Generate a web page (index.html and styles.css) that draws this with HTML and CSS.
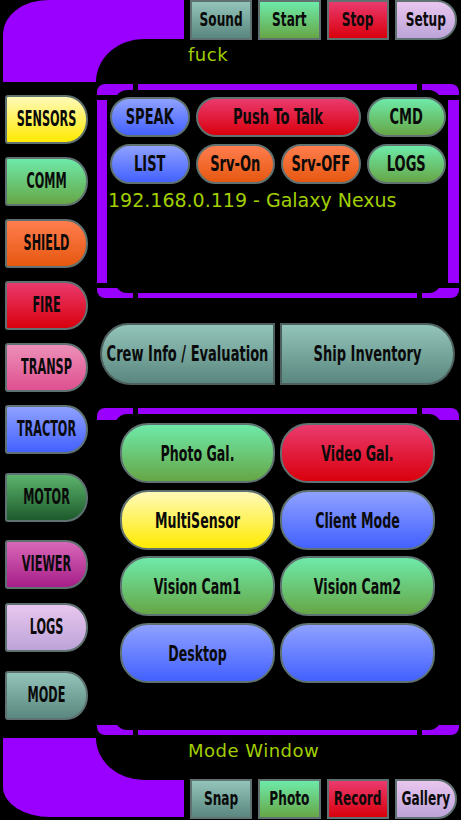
FILE: index.html
```html
<!DOCTYPE html>
<html lang="en">
<head>
<meta charset="utf-8">
<title>LCARS Panel</title>
<link rel="stylesheet" href="styles.css">
</head>
<body>
<div class="screen">
  <header class="top">
    <div class="elbow elbow-top"></div>
    <div class="top-right">
      <nav class="bar">
        <div class="tb teal"><span class="lbl">Sound</span></div>
        <div class="tb green"><span class="lbl">Start</span></div>
        <div class="tb red"><span class="lbl">Stop</span></div>
        <div class="tb lav end"><span class="lbl">Setup</span></div>
      </nav>
      <div class="caption cap-top">fuck</div>
    </div>
  </header>

  <div class="main">
    <aside class="side">
      <div class="sb yellow"><span class="lbl">SENSORS</span></div>
      <div class="sb green"><span class="lbl">COMM</span></div>
      <div class="sb orange"><span class="lbl">SHIELD</span></div>
      <div class="sb red"><span class="lbl">FIRE</span></div>
      <div class="sb pink"><span class="lbl">TRANSP</span></div>
      <div class="sb blue"><span class="lbl">TRACTOR</span></div>
      <div class="sb dgreen push6"><span class="lbl">MOTOR</span></div>
      <div class="sb magenta push5"><span class="lbl">VIEWER</span></div>
      <div class="sb lav push1"><span class="lbl">LOGS</span></div>
      <div class="sb teal push6"><span class="lbl">MODE</span></div>
    </aside>

    <section class="work">
      <div class="frame frame-a">
        <div class="hole">
          <div class="grid4">
            <div class="pill blue"><span class="lbl">SPEAK</span></div>
            <div class="pill red wide"><span class="lbl">Push To Talk</span></div>
            <div class="pill green"><span class="lbl">CMD</span></div>
            <div class="pill blue"><span class="lbl">LIST</span></div>
            <div class="pill orange"><span class="lbl">Srv-On</span></div>
            <div class="pill orange"><span class="lbl">Srv-OFF</span></div>
            <div class="pill green"><span class="lbl">LOGS</span></div>
          </div>
          <div class="ip">192.168.0.119 - Galaxy Nexus</div>
        </div>
      </div>

      <div class="crew">
        <div class="cb teal left"><span class="lbl">Crew Info / Evaluation</span></div>
        <div class="cb teal right"><span class="lbl">Ship Inventory</span></div>
      </div>

      <div class="frame frame-b">
        <div class="hole">
          <div class="grid2">
            <div class="big green"><span class="lbl">Photo Gal.</span></div>
            <div class="big red"><span class="lbl">Video Gal.</span></div>
            <div class="big yellow"><span class="lbl">MultiSensor</span></div>
            <div class="big blue"><span class="lbl">Client Mode</span></div>
            <div class="big green"><span class="lbl">Vision Cam1</span></div>
            <div class="big green"><span class="lbl">Vision Cam2</span></div>
            <div class="big blue"><span class="lbl">Desktop</span></div>
            <div class="big blue"></div>
          </div>
        </div>
      </div>
    </section>
  </div>

  <footer class="bottom">
    <div class="elbow elbow-bottom"></div>
    <div class="bottom-right">
      <div class="caption cap-bottom">Mode Window</div>
      <nav class="bar bar-bottom">
        <div class="tb teal"><span class="lbl">Snap</span></div>
        <div class="tb green"><span class="lbl">Photo</span></div>
        <div class="tb red"><span class="lbl">Record</span></div>
        <div class="tb lav end"><span class="lbl">Gallery</span></div>
      </nav>
    </div>
  </footer>
</div>
</body>
</html>
```

FILE: styles.css
```css
* { box-sizing: border-box; }

html, body {
  margin: 0;
  padding: 0;
  background: #000;
}

.screen {
  width: 461px;
  height: 820px;
  overflow: hidden;
  background: #000;
  font-family: "DejaVu Sans", sans-serif;
}

/* ---------- labels ---------- */
.lbl {
  display: inline-block;
  font-family: "DejaVu Sans Condensed", "DejaVu Sans", sans-serif;
  font-weight: bold;
  font-size: 14.5px;
  line-height: 1;
  color: #0a0a0a;
  transform: scaleY(1.45);
  white-space: nowrap;
}

/* ---------- colour gradients ---------- */
.teal    { background: linear-gradient(#93c4ba, #5a877f); }
.green   { background: linear-gradient(#6eeaa9, #66a646); }
.red     { background: linear-gradient(#ea3a6e, #d9000c); }
.lav     { background: linear-gradient(#e9c6ee, #bca4d9); }
.yellow  { background: linear-gradient(#fffab8, #ffea00); }
.orange  { background: linear-gradient(#ff7d4e, #e65810); }
.pink    { background: linear-gradient(#ec90b8, #df5090); }
.blue    { background: linear-gradient(#8fa1ff, #4361ff); }
.dgreen  { background: linear-gradient(#5cb46c, #1d5a2c); }
.magenta { background: linear-gradient(#d868b8, #a61e88); }

/* ---------- header ---------- */
.top {
  display: flex;
  height: 84px;
}

.elbow {
  position: relative;
  width: 181px;
  margin-left: 3px;
  background: #9900ff;
}

.elbow-top {
  height: 82px;
  border-top-left-radius: 45px 34px;
}

.elbow-top::after {
  content: "";
  position: absolute;
  left: 93px;
  top: 39px;
  right: 0;
  bottom: 0;
  background: #000;
  border-top-left-radius: 48px 43px;
}

.top-right {
  flex: 1;
  padding-left: 6px;
  padding-right: 4px;
}

.bar {
  display: grid;
  grid-template-columns: repeat(4, 1fr);
  gap: 6px;
  height: 40px;
}

.tb {
  display: flex;
  align-items: center;
  justify-content: center;
  border: 2px solid #5f7271;
}

.tb .lbl {
  font-size: 13.5px;
  transform: scaleY(1.5);
}

.tb.end {
  border-radius: 0 20px 20px 0;
}

.caption {
  color: #a2cf00;
  font-family: "DejaVu Sans", sans-serif;
  font-size: 18px;
  line-height: 20px;
  letter-spacing: 0.5px;
  margin-left: -2px;
}

.cap-top {
  margin-top: 5px;
}

/* ---------- main ---------- */
.main {
  display: flex;
  height: 651px;
}

.side {
  width: 97px;
  padding: 11px 0 0 5px;
  display: flex;
  flex-direction: column;
  gap: 13px;
}

.sb {
  width: 83px;
  height: 49px;
  display: flex;
  align-items: center;
  justify-content: center;
  border: 2px solid #5f7271;
  border-radius: 3px 22px 22px 3px / 3px 24px 24px 3px;
}

.sb .lbl {
  font-size: 12.5px;
  transform: scaleY(1.75);
}

.push6 { margin-top: 6px; }
.push5 { margin-top: 5px; }
.push1 { margin-top: 1px; }

.work {
  width: 362px;
}

/* ---------- frames ---------- */
.frame {
  position: relative;
  background: #9900ff;
  border-radius: 8px;
  padding: 6px 18px 5px 18px;
}

.frame::before {
  content: "";
  position: absolute;
  top: 0;
  bottom: 0;
  left: 36px;
  right: 37px;
  border-left: 5px solid #000;
  border-right: 5px solid #000;
}

.frame::after {
  content: "";
  position: absolute;
  left: 0;
  right: 0;
  background: #000;
}

.frame-a {
  height: 214px;
}

.frame-a::after {
  top: 11px;
  bottom: 10px;
  border-top: 5px solid #000;
  border-bottom: 5px solid #000;
  box-shadow: inset 10px 0 #9900ff, inset -11px 0 #9900ff;
}

.frame-b {
  height: 327px;
  margin-top: 23px;
}

.frame-b::after {
  top: 12px;
  bottom: 10px;
}

.hole {
  position: relative;
  z-index: 1;
  height: 100%;
  background: #000;
  border-radius: 12px;
}

.frame-a .hole {
  padding-top: 7px;
}

.grid4 {
  display: grid;
  grid-template-columns: repeat(4, 1fr);
  grid-auto-rows: 40px;
  column-gap: 6px;
  row-gap: 7px;
  margin: 0 -5px;
}

.pill {
  display: flex;
  align-items: center;
  justify-content: center;
  border: 2px solid #5f7271;
  border-radius: 20px;
}

.pill.wide {
  grid-column: span 2;
}

.ip {
  margin: 4px 0 0 -7px;
  color: #a2cf00;
  font-family: "DejaVu Sans", sans-serif;
  font-size: 19px;
  line-height: 24px;
  white-space: nowrap;
}

/* ---------- crew row ---------- */
.crew {
  display: flex;
  gap: 5px;
  height: 62px;
  margin-top: 25px;
  padding: 0 4px 0 3px;
}

.cb {
  flex: 1;
  display: flex;
  align-items: center;
  justify-content: center;
  border: 2px solid #4e605e;
}

.cb.left {
  border-radius: 28px 0 0 31px / 31px 0 0 31px;
}

.cb.right {
  border-radius: 0 28px 28px 0 / 0 31px 31px 0;
}

/* ---------- mode window grid ---------- */
.frame-b .hole {
  padding: 9px 6px 0 5px;
}

.grid2 {
  display: grid;
  grid-template-columns: 1fr 1fr;
  grid-auto-rows: 60px;
  column-gap: 5px;
  row-gap: 6.6px;
}

.big {
  display: flex;
  align-items: center;
  justify-content: center;
  border: 2px solid #5f7271;
  border-radius: 28px;
}

.big .lbl {
  font-size: 14px;
  transform: scaleY(1.55);
}

/* ---------- footer ---------- */
.bottom {
  display: flex;
  height: 85px;
}

.elbow-bottom {
  height: 79px;
  margin-top: 3px;
  border-bottom-left-radius: 47px 30px;
}

.elbow-bottom::after {
  content: "";
  position: absolute;
  left: 93px;
  top: 0;
  right: 0;
  height: 42px;
  background: #000;
  border-bottom-left-radius: 48px 42px;
}

.bottom-right {
  flex: 1;
  display: flex;
  flex-direction: column;
  padding: 0 4px 1px 6px;
}

.cap-bottom {
  margin-top: 6px;
}

.bar-bottom {
  margin-top: auto;
}
```
